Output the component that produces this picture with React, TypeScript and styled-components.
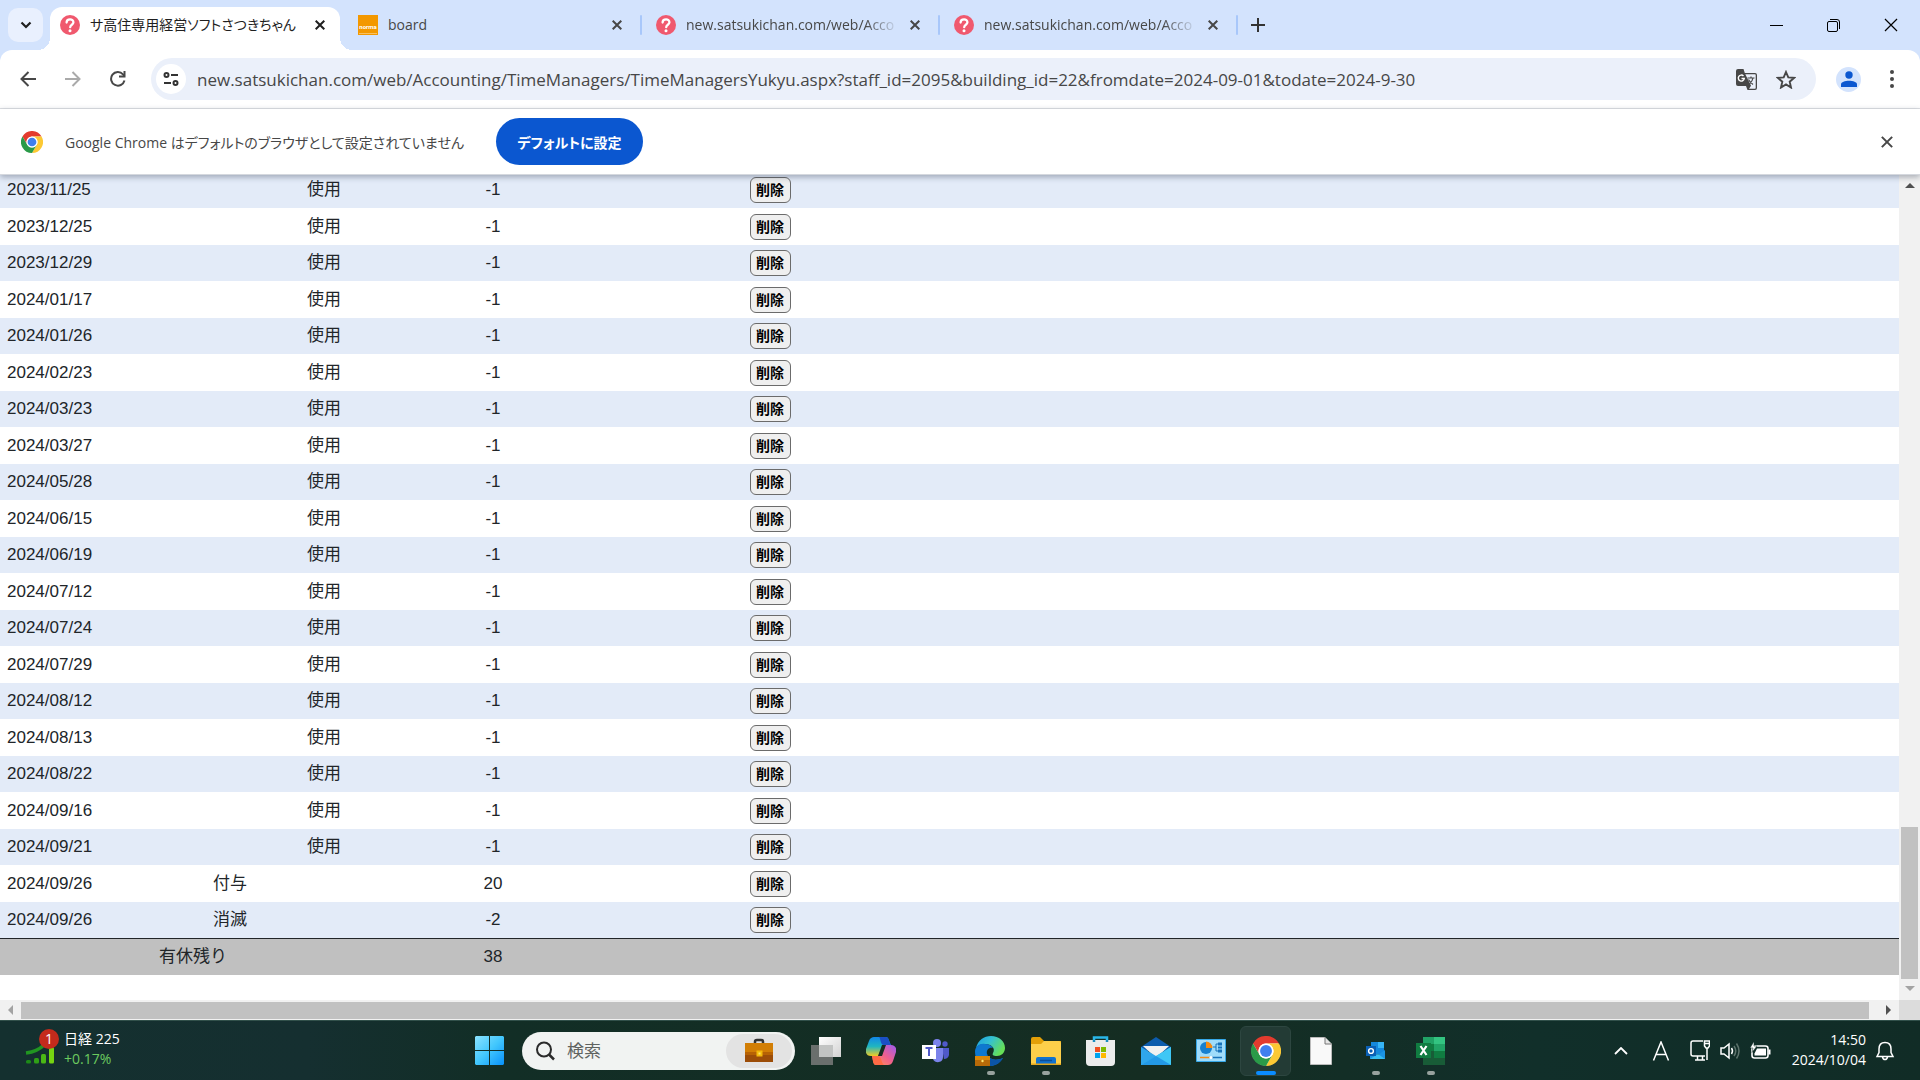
import React from "react";
import styled, { createGlobalStyle } from "styled-components";

const UI = `"Open Sans", "Noto Sans CJK JP", sans-serif`;
const PAGE = `"Liberation Sans", "Noto Sans CJK JP", sans-serif`;

const GlobalStyle = createGlobalStyle`
  *, *::before, *::after { box-sizing: border-box; }
  html, body { margin: 0; height: 100%; }
  body { background: #fff; overflow: hidden; font-family: ${UI}; }
  button, input { font: inherit; color: inherit; margin: 0; }
  svg { display: block; flex: none; }
`;

const Screen = styled.div`
  height: 100vh;
  display: flex;
  flex-direction: column;
`;

const IconButton = styled.button<{ $w?: number; $h?: number; $bg?: string; $r?: number }>`
  border: 0;
  padding: 0;
  flex: none;
  display: flex;
  align-items: center;
  justify-content: center;
  width: ${(p) => p.$w ?? 24}px;
  height: ${(p) => p.$h ?? 24}px;
  border-radius: ${(p) => p.$r ?? 0}px;
  background: ${(p) => p.$bg ?? "transparent"};
`;

/* ---------- tab strip ---------- */

const TabStrip = styled.div`
  height: 50px;
  flex: none;
  display: flex;
  align-items: flex-end;
  padding-left: 8px;
  background: #d3e3fd;
`;

const TabSearch = styled.div`
  width: 42px;
  height: 42px;
`;

const Tab = styled.div<{ $active?: boolean }>`
  position: relative;
  flex: none;
  display: flex;
  align-items: center;
  width: ${(p) => (p.$active ? 290 : 298)}px;
  height: 43px;
  margin-right: ${(p) => (p.$active ? 4 : 0)}px;
  padding: ${(p) => (p.$active ? "0 8px 7px 10px" : "0 13px 7px 14px")};
  border-radius: 12px 12px 0 0;
  background: ${(p) => (p.$active ? "#fff" : "transparent")};
  color: ${(p) => (p.$active ? "#1f1f1f" : "#474747")};
  font-size: 14px;
  font-feature-settings: "palt";

  &::before, &::after {
    content: "";
    position: absolute;
    bottom: 0;
    width: 12px;
    height: 12px;
    display: ${(p) => (p.$active ? "block" : "none")};
  }
  &::before {
    left: -12px;
    background: radial-gradient(circle at 0 0, transparent 12px, #fff 12px);
  }
  &::after {
    right: -12px;
    background: radial-gradient(circle at 100% 0, transparent 12px, #fff 12px);
  }
`;

const TabTitle = styled.span<{ $fade?: boolean }>`
  flex: 1;
  margin: 0 4px 0 10px;
  line-height: 24px;
  overflow: hidden;
  white-space: nowrap;
  mask-image: ${(p) => (p.$fade ? "linear-gradient(90deg, #000 84%, transparent)" : "none")};
`;

const Divider = styled.span`
  width: 2px;
  height: 20px;
  margin-bottom: 15px;
  margin-left: -2px;
  border-radius: 1px;
  background: #a8c7fa;
`;

const NewTab = styled.div`
  padding: 0 8px 13px;
`;

const WindowButtons = styled.div`
  margin-left: auto;
  align-self: stretch;
  display: flex;
`;

/* ---------- toolbar ---------- */

const ToolbarBack = styled.div`
  flex: none;
  background: #d3e3fd;
`;

const Toolbar = styled.div`
  display: flex;
  align-items: center;
  height: 59px;
  padding: 0 20px 0 12px;
  background: #fff;
  border-radius: 12px 12px 0 0;
  border-bottom: 1px solid #dfe1e5;
`;

const NavGroup = styled.div`
  display: flex;
  gap: 13px;
  width: 139px;
`;

const Omnibox = styled.label`
  flex: 1;
  display: flex;
  align-items: center;
  height: 42px;
  padding: 0 18px 0 5px;
  border-radius: 21px;
  background: #ebf0fa;
`;

const UrlInput = styled.input`
  flex: 1;
  min-width: 0;
  margin-left: 11px;
  border: 0;
  padding: 0;
  outline: 0;
  background: transparent;
  color: #474747;
  font-size: 17px;
`;

const OmniActions = styled.div`
  display: flex;
  gap: 16px;
`;

const ToolbarEnd = styled.div`
  display: flex;
  align-items: center;
  gap: 23px;
  margin-left: 20px;
`;

/* ---------- info bar ---------- */

const InfoBar = styled.div`
  position: relative;
  z-index: 1;
  flex: none;
  display: flex;
  align-items: center;
  height: 66px;
  padding: 0 21px;
  background: #fff;
  border-bottom: 1px solid #d5d8de;
  box-shadow: 0 2px 6px rgba(50, 60, 80, 0.4);
  color: #474747;
  font-size: 14px;
  font-feature-settings: "palt";
`;

const InfoText = styled.span`
  width: 453px;
  padding-left: 22px;
  white-space: nowrap;
`;

const DefaultButton = styled.button`
  width: 147px;
  height: 47px;
  margin-right: auto;
  border: 0;
  padding: 0;
  border-radius: 24px;
  background: #0b57d0;
  color: #fff;
  font-weight: 700;
`;

/* ---------- page ---------- */

const Viewport = styled.div`
  flex: 1;
  min-height: 0;
  display: flex;
`;

const PageColumn = styled.div`
  flex: 1;
  min-width: 0;
  display: flex;
  flex-direction: column;
`;

const Page = styled.main`
  flex: 1;
  min-height: 0;
  display: flex;
  flex-direction: column;
  justify-content: flex-end;
  padding-bottom: 25px;
  overflow: hidden;
`;

const LeaveTable = styled.table`
  width: 100%;
  flex: none;
  table-layout: fixed;
  border-collapse: separate;
  border-spacing: 0;
  font-family: ${PAGE};
  font-size: 17px;
  line-height: 24px;
  color: #212529;
`;

const Col = styled.col<{ $w?: number }>`
  width: ${(p) => (p.$w ? `${p.$w}px` : "auto")};
`;

const Row = styled.tr`
  height: 36px;
  background: #e3ebf8;
  &:nth-child(even) {
    height: 37px;
    background: #fff;
  }
`;

const Cell = styled.td<{ $left?: boolean }>`
  padding: ${(p) => (p.$left ? "0 7px" : "0")};
  text-align: ${(p) => (p.$left ? "left" : "center")};
  vertical-align: middle;
`;

const TotalRow = styled.tr`
  height: 37px;
  background: #c0c0c0;
  & > td { border-top: 1px solid #212529; }
`;

const DeleteButton = styled.button`
  display: block;
  width: 41px;
  height: 26px;
  margin: 0 auto;
  padding: 0;
  border: 1px solid #6b6b6b;
  border-radius: 6px;
  background: #efefef;
  color: #000;
  font-size: 14px;
  font-weight: 700;
  line-height: 24px;
`;

/* ---------- scroll bars ---------- */

const VBar = styled.div`
  width: 21px;
  display: flex;
  flex-direction: column;
  align-items: center;
  background: #f1f1f1;
`;

const VTrack = styled.div`
  flex: 1;
  display: flex;
  flex-direction: column;
  justify-content: flex-end;
  padding-bottom: 1px;
`;

const VThumb = styled.div`
  width: 17px;
  height: 152px;
  background: #c1c1c1;
`;

const HBar = styled.div`
  flex: none;
  height: 20px;
  display: flex;
  align-items: center;
  padding-left: 1px;
  background: #f1f1f1;
`;

const HTrack = styled.div`
  flex: 1;
  padding-right: 10px;
`;

const HThumb = styled.div`
  height: 17px;
  background: #c1c1c1;
`;

const Corner = styled.div`
  width: 21px;
  height: 20px;
  background: #dcdcdc;
`;

/* ---------- taskbar ---------- */

const Taskbar = styled.footer`
  flex: none;
  height: 60px;
  display: grid;
  grid-template-columns: 1fr auto 1fr;
  align-items: center;
  background: linear-gradient(90deg, #14302f 0, #152f30 16%, #122e26 26%, #152d22 60%, #112f2a 80%, #112c26 100%);
  border-top: 1px solid #31504a;
  color: #fff;
  font-size: 14px;
  line-height: 20px;
`;

const Widget = styled.button`
  justify-self: start;
  display: flex;
  align-items: center;
  gap: 5px;
  padding: 0 0 3px 24px;
  border: 0;
  background: transparent;
  text-align: left;
`;

const Lines = styled.span`
  display: flex;
  flex-direction: column;
`;

const Gain = styled.span`
  color: #6ccb5f;
`;

const Dock = styled.div`
  display: flex;
  align-items: center;
`;

const DockButton = styled.button<{ $active?: boolean; $mark?: string }>`
  position: relative;
  display: flex;
  align-items: center;
  justify-content: center;
  width: 51px;
  height: 50px;
  margin: 0 2px;
  padding: 0;
  border: 1px solid ${(p) => (p.$active ? "#2d4640" : "transparent")};
  border-radius: 6px;
  background: ${(p) => (p.$active ? "#233b35" : "transparent")};

  &::after {
    content: "";
    position: absolute;
    bottom: 0;
    height: 4px;
    border-radius: 2px;
    width: ${(p) => (p.$active ? 20 : 8)}px;
    background: ${(p) => p.$mark ?? "transparent"};
  }
`;

const SearchBox = styled.label`
  display: flex;
  align-items: center;
  width: 273px;
  height: 38px;
  margin: 0 3px 0 5px;
  padding: 0 3px 0 13px;
  border-radius: 19px;
  background: #f1f3f2;
`;

const SearchInput = styled.input`
  flex: 1;
  min-width: 0;
  margin-left: 12px;
  padding: 0;
  border: 0;
  outline: 0;
  background: transparent;
  font-size: 17px;
  color: #1f1f1f;
  &::placeholder { color: #5f6361; opacity: 1; }
`;

const Tray = styled.div`
  justify-self: end;
  display: flex;
  align-items: center;
  padding-right: 25px;
`;

const LanguageButton = styled(IconButton)`
  margin: 0 14px 0 18px;
`;

const TrayGroup = styled.div`
  display: flex;
  align-items: center;
  gap: 10px;
  margin-right: 21px;
`;

const Clock = styled(Lines)`
  align-items: flex-end;
  margin-right: 9px;
  padding-bottom: 2px;
`;

/* ---------- drawings ---------- */

const Question = () => (
  <svg width="20" height="20" viewBox="0 0 20 20">
    <circle cx="10" cy="10" r="10" fill="#f0596e" />
    <path d="M6.600 7.600C6.600 3.400 13.600 3.400 13.400 7.500c-.1 2.200-3.200 2.300-3.200 4.700" fill="none" stroke="#fff" strokeWidth="2.300" strokeLinecap="round" />
    <circle cx="10" cy="15.700" r="1.500" fill="#fff" />
  </svg>
);

const Norma = () => (
  <svg width="20" height="20" viewBox="0 0 20 20">
    <path d="M0 0h20v20H0z" fill="#f39800" />
    <text x="10" y="14" textAnchor="middle" fontSize="6" fontWeight="700" fill="#fff" fontFamily="Roboto, sans-serif">norma</text>
    <path d="M1 18.500h18" stroke="#fbd38a" strokeWidth=".7" />
  </svg>
);

const Cross = ({ s = 10, w = 2, c = "#333" }: { s?: number; w?: number; c?: string }) => (
  <svg width={s} height={s} viewBox="0 0 10 10">
    <path d="M.7.7l8.600 8.600M9.300.7L.7 9.300" stroke={c} strokeWidth={(w * 10) / s} />
  </svg>
);

const Chrome = ({ s }: { s: number }) => (
  <svg width={s} height={s} viewBox="0 0 48 48">
    <circle cx="24" cy="24" r="23" fill="#fff" />
    <path d="M24 12h20.800A24 24 0 0 0 3.200 12l10.400 18A12 12 0 0 1 24 12z" fill="#e33b2e" />
    <path d="M34.400 30L24 48A24 24 0 0 0 44.800 12H24a12 12 0 0 1 10.400 18z" fill="#fcc934" />
    <path d="M13.600 30L3.200 12A24 24 0 0 0 24 48l10.400-18a12 12 0 0 1-20.800 0z" fill="#2a9a48" />
    <circle cx="24" cy="24" r="12" fill="#fff" />
    <circle cx="24" cy="24" r="9.500" fill="#3f7fee" />
  </svg>
);

const Arrow = ({ dir, c = "#505050" }: { dir: "up" | "down" | "left" | "right"; c?: string }) => {
  const d = { up: "M5 13l5-5 5 5z", down: "M5 6l5 5 5-5z", left: "M12 5l-5 5 5 5z", right: "M7 5l5 5-5 5z" }[dir];
  return (
    <svg width="20" height="20" viewBox="0 0 20 20"><path d={d} fill={c} /></svg>
  );
};

const Stocks = () => (
  <svg width="35" height="40" viewBox="0 0 35 40">
    <rect x="2" y="31" width="5" height="3.500" rx="1.500" fill="#1d8a18" />
    <rect x="10" y="29" width="5" height="5.500" rx="1.500" fill="#2fa016" />
    <rect x="17" y="25" width="5" height="9.500" rx="1.500" fill="#4bb815" />
    <rect x="25" y="18" width="5" height="16.500" rx="1.500" fill="#76d511" />
    <path d="M2 24c8-1 14-4 18-8" stroke="#219621" strokeWidth="3.500" fill="none" />
    <circle cx="25" cy="10" r="10" fill="#c42b1c" />
    <text x="25" y="15" textAnchor="middle" fontSize="14" fill="#fff" fontFamily="Open Sans, sans-serif">1</text>
  </svg>
);

const Windows = () => (
  <svg width="29" height="29" viewBox="0 0 29 29">
    <defs><linearGradient id="win" gradientUnits="userSpaceOnUse" x1="0" y1="0" x2="29" y2="29"><stop stopColor="#8be3ff" /><stop offset=".5" stopColor="#42c7fd" /><stop offset="1" stopColor="#0891fa" /></linearGradient></defs>
    <path d="M1 0h13v14H0V1zM15 0h13l1 1v13H15zM0 15h14v14H1l-1-1zM15 15h14v13l-1 1H15z" fill="url(#win)" />
  </svg>
);

const Briefcase = () => (
  <svg width="66" height="34" viewBox="0 0 66 34">
    <rect width="66" height="34" rx="17" fill="#e3e3e3" />
    <path d="M29 9V7.500Q29 6 31 6h4q2 0 2 1.500V9" fill="none" stroke="#333" strokeWidth="2.500" />
    <path d="M19 9h28v19H19z" fill="#d27e05" />
    <path d="M19 18h28v5l-14-2-14 2z" fill="#b76204" />
    <path d="M19 21h28v7H19z" fill="#9c4d08" />
    <path d="M31.500 17.500h4v4h-4z" fill="#fce36b" stroke="#f3b90a" strokeWidth="2" />
  </svg>
);

const TaskView = () => (
  <svg width="30" height="28" viewBox="0 0 30 28">
    <defs><linearGradient id="tv" x1="0" y1="0" x2="1" y2="1"><stop stopColor="#fff" /><stop offset="1" stopColor="#d2d2d2" /></linearGradient></defs>
    <path d="M0 8h22v20H0z" fill="#6a6f6d" />
    <path d="M8 0h22v20H8z" fill="url(#tv)" />
    <path d="M8 8h14v12H8z" fill="#c2c4c3" />
  </svg>
);

const Copilot = () => (
  <svg width="30" height="28" viewBox="0 0 30 28">
    <defs>
      <linearGradient id="cp1" x1="0" y1="0" x2="0" y2="1"><stop stopColor="#1187e8" /><stop offset=".5" stopColor="#20b6c0" /><stop offset="1" stopColor="#f1cd22" /></linearGradient>
      <linearGradient id="cp2" x1="1" y1="0" x2="0" y2="1"><stop stopColor="#9a5cf0" /><stop offset=".5" stopColor="#f05f8d" /><stop offset="1" stopColor="#ff9d4d" /></linearGradient>
    </defs>
    <path d="M8 0h12c3 0 3 5 5 8h-7L12 19H5c-4 0-6-3-5-7L3 4c1-3 3-4 5-4z" fill="url(#cp1)" />
    <path d="M13 0h7c3 0 3 5 5 8h-8c-3-2-2-6-4-8z" fill="#1b4fc4" />
    <path d="M22 28H10c-3 0-3-5-4-9h6l6-11h7c4 0 6 3 5 7l-3 9c-1 3-3 4-5 4z" fill="url(#cp2)" />
    <path d="M18 28h-8c-3 0-3-5-4-9h7c3 2 2 7 5 9z" fill="#ff6a45" />
    <path d="M12 19l4-11h4l-4 11z" fill="#152d22" />
  </svg>
);

const Teams = () => (
  <svg width="27" height="24" viewBox="0 0 27 24">
    <circle cx="23" cy="5" r="2.700" fill="#5059c9" />
    <path d="M20 9h7v7q-1 4-5 4z" fill="#5059c9" />
    <circle cx="15" cy="4" r="4" fill="#7b83eb" />
    <path d="M10 9h11v9c0 6-8 7-10 2z" fill="#7b83eb" />
    <path d="M0 6h14v14H0z" fill="#fff" />
    <path d="M3.500 9h7M7 9v8" stroke="#5059c9" strokeWidth="2" />
  </svg>
);

const Edge = () => (
  <svg width="31" height="30" viewBox="0 0 31 30">
    <defs>
      <linearGradient id="ed1" x1="0" y1="0" x2="1" y2=".5"><stop stopColor="#1b9de2" /><stop offset=".5" stopColor="#35c1d0" /><stop offset="1" stopColor="#66df57" /></linearGradient>
    </defs>
    <path d="M1 12C3 4 9 0 16 0c8 0 14 5 14 12 0 5-4 8-8 8-4 0-5-1-4-3 3-5-2-9-8-9-4 0-7 1-9 4z" fill="url(#ed1)" />
    <path d="M0 16c0-6 5-9 10-8 4 0 7 2 8 4-4-1-7 2-6 6 2 6 9 7 16 4-4 6-9 8-13 8C6 30 0 24 0 16z" fill="#0f78cf" />
    <path d="M12 18c2 6 9 7 16 4-3 6-9 8-13 8l-4-4z" fill="#0b54a5" />
    <path d="M0 20h15v10H0z" fill="#b86a08" />
    <path d="M0 20h15v4H0z" fill="#dc8808" />
    <circle cx="7.500" cy="25" r="1.200" fill="#ffe36b" />
  </svg>
);

const Explorer = () => (
  <svg width="30" height="28" viewBox="0 0 30 28">
    <path d="M0 2q0-2 2-2h7l4 4h17v8H0z" fill="#e3a008" />
    <path d="M0 7h10l3-3h15q2 0 2 2v21H0z" fill="#fdcf4a" />
    <path d="M5 27v-5q0-2 2-2h16q2 0 2 2v5z" fill="#1273cf" />
    <path d="M9 23.500h12" stroke="#0b4f9a" strokeWidth="1.500" />
    <path d="M0 26.500h30V28H0z" fill="#e5a81d" />
  </svg>
);

const Store = () => (
  <svg width="29" height="30" viewBox="0 0 29 30">
    <path d="M8 6V1.500h13V6" fill="none" stroke="#29b6e8" strokeWidth="2.500" />
    <path d="M0 4h29v22q0 4-4 4H4q-4 0-4-4z" fill="#ececec" />
    <path d="M8 6V4M21 6V4" stroke="#1a8dc0" strokeWidth="2.500" />
    <path d="M9 11h5v5H9z" fill="#f25022" /><path d="M15 11h5v5h-5z" fill="#7fba00" />
    <path d="M9 17h5v5H9z" fill="#00a4ef" /><path d="M15 17h5v5h-5z" fill="#ffb900" />
  </svg>
);

const Mail = () => (
  <svg width="30" height="28" viewBox="0 0 30 28">
    <path d="M0 10L15 0l15 10v4H0z" fill="#0d5cad" />
    <path d="M2 9h26L15 21z" fill="#f1f1f1" />
    <path d="M0 10l15 9 15-9v18H0z" fill="#2fa6ec" />
    <path d="M30 10L12 21l-12 7h30z" fill="#3fc7f5" />
    <path d="M15 19l15 9H0z" fill="#2399e6" />
  </svg>
);

const ControlPanel = () => (
  <svg width="30" height="23" viewBox="0 0 30 23">
    <path d="M.5.500h29v22H.5z" fill="#9fdcfb" stroke="#37a8e8" />
    <circle cx="10" cy="9" r="6" fill="#1780cf" />
    <path d="M10 9V2.500A6.500 6.500 0 0 1 16.500 9z" fill="#f58b12" />
    <path d="M17 8h3M20 8V5h3M20 8v4h3" stroke="#1670b8" fill="none" />
    <path d="M22 3.500h4v3h-4zM22 7.500h4v2h-4zM22 10.500h4v3h-4z" fill="#1873bb" />
    <path d="M4 18.500h10" stroke="#f58b12" strokeWidth="1.500" /><path d="M16 18.500h10" stroke="#1873bb" strokeWidth="1.500" />
    <circle cx="15" cy="18.500" r="1.600" fill="#fff" />
  </svg>
);

const Doc = () => (
  <svg width="22" height="28" viewBox="0 0 22 28">
    <path d="M.5.500h14.500l6.500 6.500v20.500H.5z" fill="#f9f9f9" stroke="#bbb" />
    <path d="M15 .5V7h6.500" fill="#e6e6e6" stroke="#777" />
  </svg>
);

const Outlook = () => (
  <svg width="19" height="18" viewBox="0 0 19 18">
    <path d="M5 0h13v12H5z" fill="#1488dc" /><path d="M12 0h6v6h-6z" fill="#36b5f5" />
    <path d="M4 8l8 5 7-5v9H4z" fill="#1b94e4" /><path d="M4 17l8-5 7 5z" fill="#37bdf0" />
    <path d="M0 4h10v10H0z" fill="#0a5fb4" />
    <circle cx="5" cy="9" r="2.400" fill="none" stroke="#fff" strokeWidth="1.400" />
  </svg>
);

const Excel = () => (
  <svg width="29" height="28" viewBox="0 0 29 28">
    <path d="M7 0h11v14H7z" fill="#21a366" /><path d="M18 0h11v7H18z" fill="#33c481" />
    <path d="M18 7h11v7H18z" fill="#21a366" /><path d="M7 7h11v7H7z" fill="#107c41" />
    <path d="M7 14h11v14H7z" fill="#185c37" /><path d="M18 14h11v7H18z" fill="#107c41" />
    <path d="M18 21h11v7H18z" fill="#185c37" /><path d="M0 6h15v15H0z" fill="#107c41" />
    <path d="M4.500 9l6 9M10.500 9l-6 9" stroke="#fff" strokeWidth="2.200" />
  </svg>
);

/* ---------- data ---------- */

const used = [
  "2023/11/25", "2023/12/25", "2023/12/29", "2024/01/17", "2024/01/26", "2024/02/23", "2024/03/23",
  "2024/03/27", "2024/05/28", "2024/06/15", "2024/06/19", "2024/07/12", "2024/07/24", "2024/07/29",
  "2024/08/12", "2024/08/13", "2024/08/22", "2024/09/16", "2024/09/21",
];

const entries = [
  ...used.map((date) => ({ date, grant: "", use: "使用", days: "-1" })),
  { date: "2024/09/26", grant: "付与", use: "", days: "20" },
  { date: "2024/09/26", grant: "消滅", use: "", days: "-2" },
];

const tabs = [
  { title: "サ高住専用経営ソフトさつきちゃん", icon: <Question />, active: true },
  { title: "board", icon: <Norma /> },
  { title: "new.satsukichan.com/web/Acco", icon: <Question />, fade: true },
  { title: "new.satsukichan.com/web/Acco", icon: <Question />, fade: true },
];

const apps: { name: string; icon: React.ReactNode; active?: boolean; mark?: string }[] = [
  { name: "タスク ビュー", icon: <TaskView /> },
  { name: "Copilot", icon: <Copilot /> },
  { name: "Teams", icon: <Teams /> },
  { name: "Edge", icon: <Edge />, mark: "#98a29e" },
  { name: "エクスプローラー", icon: <Explorer />, mark: "#98a29e" },
  { name: "Store", icon: <Store /> },
  { name: "メール", icon: <Mail /> },
  { name: "コントロール パネル", icon: <ControlPanel /> },
  { name: "Chrome", icon: <Chrome s={30} />, active: true, mark: "#0a8cff" },
  { name: "ドキュメント", icon: <Doc /> },
  { name: "Outlook", icon: <Outlook />, mark: "#98a29e" },
  { name: "Excel", icon: <Excel />, mark: "#98a29e" },
];

export default function App() {
  return (
    <Screen>
      <GlobalStyle />
      <TabStrip>
        <TabSearch>
          <IconButton $w={35} $h={34} $r={10} $bg="#e9f0fe" aria-label="タブを検索">
            <svg width="12" height="8" viewBox="0 0 12 8"><path d="M1.500 1.500L6 6l4.500-4.500" fill="none" stroke="#1f1f1f" strokeWidth="2.200" /></svg>
          </IconButton>
        </TabSearch>
        {tabs.map((t, i) => (
          <React.Fragment key={i}>
            <Tab $active={t.active}>
              {t.icon}
              <TabTitle $fade={t.fade}>{t.title}</TabTitle>
              <IconButton aria-label="閉じる"><Cross c={t.active ? "#1f1f1f" : "#474747"} /></IconButton>
            </Tab>
            {i > 0 && <Divider />}
          </React.Fragment>
        ))}
        <NewTab>
          <IconButton aria-label="新しいタブ">
            <svg width="14" height="14" viewBox="0 0 14 14"><path d="M7 0v14M0 7h14" stroke="#333" strokeWidth="2" /></svg>
          </IconButton>
        </NewTab>
        <WindowButtons>
          <IconButton $w={57} $h={50} aria-label="最小化">
            <svg width="13" height="13" viewBox="0 0 13 13"><path d="M0 6.500h13" stroke="#000" /></svg>
          </IconButton>
          <IconButton $w={57} $h={50} aria-label="元に戻す">
            <svg width="13" height="13" viewBox="0 0 13 13"><rect x=".5" y="2.500" width="10" height="10" rx="1.500" fill="none" stroke="#000" /><path d="M3 .5h7q2.500 0 2.500 2.500v7" fill="none" stroke="#000" /></svg>
          </IconButton>
          <IconButton $w={58} $h={50} aria-label="閉じる"><Cross s={14} w={1.2} c="#000" /></IconButton>
        </WindowButtons>
      </TabStrip>

      <ToolbarBack>
        <Toolbar>
          <NavGroup>
            <IconButton $w={32} $h={32} aria-label="戻る">
              <svg width="16" height="16" viewBox="0 0 16 16"><path d="M16 8H2M8.500 1L1.500 8l7 7" fill="none" stroke="#474747" strokeWidth="2" /></svg>
            </IconButton>
            <IconButton $w={32} $h={32} aria-label="進む">
              <svg width="16" height="16" viewBox="0 0 16 16"><path d="M0 8h14M7.500 1l7 7-7 7" fill="none" stroke="#aaa" strokeWidth="2" /></svg>
            </IconButton>
            <IconButton $w={32} $h={32} aria-label="再読み込み">
              <svg width="16" height="16" viewBox="0 0 16 16"><path d="M14.500 9.500A6.800 6.800 0 1 1 13 3.300L14.500 5" fill="none" stroke="#474747" strokeWidth="2" /><path d="M15.500 0v6.500H9v-2h4.500V0z" fill="#474747" /></svg>
            </IconButton>
          </NavGroup>
          <Omnibox>
            <IconButton $w={30} $h={30} $r={15} $bg="#fff" aria-label="サイト情報">
              <svg width="16" height="14" viewBox="0 0 16 14" fill="none" stroke="#333" strokeWidth="2"><circle cx="3.500" cy="3" r="2" /><path d="M8 3h7M1 11h7" /><circle cx="12.500" cy="11" r="2" /></svg>
            </IconButton>
            <UrlInput
              aria-label="アドレス"
              readOnly
              value="new.satsukichan.com/web/Accounting/TimeManagers/TimeManagersYukyu.aspx?staff_id=2095&building_id=22&fromdate=2024-09-01&todate=2024-9-30"
            />
            <OmniActions>
              <IconButton aria-label="翻訳">
                <svg width="21" height="21" viewBox="0 0 21 21">
                  <path d="M2 0h5.500l1.300 4H19q2 0 2 2v13q0 2-2 2h-7.500L10 17H2q-2 0-2-2V2q0-2 2-2z" fill="#474747" />
                  <path d="M9.300 5.300H19q.7 0 .7.7v13q0 .7-.7.700h-6l2-3z" fill="#ebf0fa" />
                  <path d="M7.500 7A3 3 0 1 0 8.300 9.500H5.500" fill="none" stroke="#fff" strokeWidth="1.400" />
                  <path d="M11.500 9h7M15 7.500V9M17 9c-.5 3-2 4.500-3.500 6M12.500 10.500c1 2 2.500 3.500 4.500 5" fill="none" stroke="#474747" strokeWidth="1.200" />
                </svg>
              </IconButton>
              <IconButton aria-label="ブックマーク">
                <svg width="20" height="19" viewBox="0 0 20 19"><path d="M10 2l2.300 5.400 5.700.5-4.300 3.800 1.300 5.800-5-3.100-5 3.100 1.300-5.800L2 7.900l5.700-.5z" fill="none" stroke="#474747" strokeWidth="1.900" /></svg>
              </IconButton>
            </OmniActions>
          </Omnibox>
          <ToolbarEnd>
            <IconButton $w={25} $h={25} $r={13} $bg="#d3e3fd" aria-label="プロフィール">
              <svg width="16" height="16" viewBox="0 0 16 16" fill="#0b57d0"><circle cx="8" cy="4" r="3.700" /><path d="M0 16v-2.500C0 8.500 16 8.500 16 13.500V16z" /></svg>
            </IconButton>
            <IconButton $w={16} aria-label="メニュー">
              <svg width="4" height="18" viewBox="0 0 4 18" fill="#474747"><circle cx="2" cy="2" r="2" /><circle cx="2" cy="9" r="2" /><circle cx="2" cy="16" r="2" /></svg>
            </IconButton>
          </ToolbarEnd>
        </Toolbar>
      </ToolbarBack>

      <InfoBar>
        <Chrome s={22} />
        <InfoText>Google Chrome はデフォルトのブラウザとして設定されていません</InfoText>
        <DefaultButton>デフォルトに設定</DefaultButton>
        <IconButton aria-label="閉じる"><Cross s={12} c="#474747" /></IconButton>
      </InfoBar>

      <Viewport>
        <PageColumn>
          <Page>
            <LeaveTable>
              <colgroup>
                <Col $w={198} /><Col $w={64} /><Col $w={124} /><Col $w={214} /><Col $w={340} /><Col />
              </colgroup>
              <tbody>
                {entries.map((e, i) => (
                  <Row key={i}>
                    <Cell $left>{e.date}</Cell>
                    <Cell>{e.grant}</Cell>
                    <Cell>{e.use}</Cell>
                    <Cell>{e.days}</Cell>
                    <Cell><DeleteButton>削除</DeleteButton></Cell>
                    <Cell />
                  </Row>
                ))}
              </tbody>
              <tfoot>
                <TotalRow>
                  <Cell colSpan={3}>有休残り</Cell>
                  <Cell>38</Cell>
                  <Cell colSpan={2} />
                </TotalRow>
              </tfoot>
            </LeaveTable>
          </Page>
          <HBar>
            <Arrow dir="left" c="#a3a3a3" />
            <HTrack><HThumb /></HTrack>
            <Arrow dir="right" />
          </HBar>
        </PageColumn>
        <VBar>
          <Arrow dir="up" />
          <VTrack><VThumb /></VTrack>
          <Arrow dir="down" c="#a3a3a3" />
          <Corner />
        </VBar>
      </Viewport>

      <Taskbar>
        <Widget>
          <Stocks />
          <Lines><span>日経 225</span><Gain>+0.17%</Gain></Lines>
        </Widget>
        <Dock>
          <DockButton aria-label="スタート"><Windows /></DockButton>
          <SearchBox>
            <svg width="20" height="20" viewBox="0 0 20 20"><circle cx="9" cy="8.500" r="7" fill="none" stroke="#2b2b2b" strokeWidth="2" /><path d="M14 13.500l5 5" stroke="#2b2b2b" strokeWidth="2.500" /></svg>
            <SearchInput placeholder="検索" aria-label="検索" />
            <Briefcase />
          </SearchBox>
          {apps.map((a) => (
            <DockButton key={a.name} $active={a.active} $mark={a.mark} aria-label={a.name}>{a.icon}</DockButton>
          ))}
        </Dock>
        <Tray>
          <svg width="14" height="8" viewBox="0 0 14 8"><path d="M1 7l6-6 6 6" fill="none" stroke="#fff" strokeWidth="1.800" /></svg>
          <LanguageButton $w={30} aria-label="入力モード">
            <svg width="26" height="20" viewBox="0 0 26 20"><path d="M5.500 19.500L13 1l7.500 18.500M8 13.500h10" fill="none" stroke="#fff" strokeWidth="1.500" /></svg>
          </LanguageButton>
          <TrayGroup>
            <svg width="20" height="21" viewBox="0 0 20 21" fill="none" stroke="#fff" strokeWidth="1.500"><path d="M13 1H3Q1 1 1 3v11q0 2 2 2h12M5 20h10M7.500 16v4M12.500 16v4" /><path d="M14.500 1h5v5l-1.500 2h-2l-1.500-2zM14.500 3.500h5M17 8v12" /></svg>
            <svg width="20" height="18" viewBox="0 0 20 18" fill="none" stroke="#fff" strokeWidth="1.500"><path d="M1 6h3l5-4v14l-5-4H1z" /><path d="M11.500 6q2 3 0 6" /><path d="M14 4q3.500 5 0 10M16.500 1.500q5 7.500 0 15" stroke="#5d736c" /></svg>
            <svg width="21" height="17" viewBox="0 0 21 17"><rect x="2" y="4" width="16" height="12" rx="2.500" fill="none" stroke="#fff" strokeWidth="1.600" /><path d="M7 6.500h9v7H4.500v-2z" fill="#fff" /><path d="M18.500 7.500h2v5h-2z" fill="#fff" /><path d="M4-.5L0 6h3l-1 4.500L7 4H4z" fill="#fff" stroke="#112c26" strokeWidth=".5" /></svg>
          </TrayGroup>
          <Clock><span>14:50</span><span>2024/10/04</span></Clock>
          <svg width="20" height="20" viewBox="0 0 20 20" fill="none" stroke="#fff" strokeWidth="1.500"><path d="M2 15.500l2-4V8q0-6.500 6-6.500T16 8v3.500l2 4zM7.500 16q.5 2.500 2.500 2.500t2.500-2.500" /></svg>
        </Tray>
      </Taskbar>
    </Screen>
  );
}
